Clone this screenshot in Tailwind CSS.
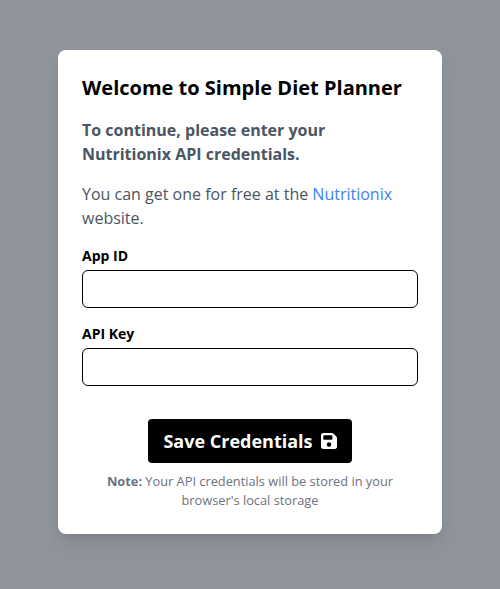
<!DOCTYPE html>
<html lang="en">
<head>
<meta charset="utf-8">
<title>Simple Diet Planner</title>
<script src="https://cdn.jsdelivr.net/npm/@tailwindcss/browser@4"></script>
</head>
<body class="flex min-h-screen items-start justify-center bg-[#8f949b] pt-[50px] font-['Open_Sans',sans-serif] text-black antialiased">
<main class="h-[484px] w-96 rounded-lg bg-white p-6 shadow-lg">
  <h1 class="text-xl leading-7 font-bold">Welcome to Simple Diet Planner</h1>
  <p class="mt-4 text-base leading-6 font-bold text-[#4b5563]">To continue, please enter your<br>Nutritionix API credentials.</p>
  <p class="mt-4 text-base leading-6 text-[#4b5563]">You can get one for free at the <a href="#" class="text-[#3b82f6]">Nutritionix</a> website.</p>
  <form>
    <label for="app" class="mt-4 block text-sm leading-5 font-bold">App ID</label>
    <input id="app" class="mt-1 block h-[38px] w-full rounded-md border border-black px-3">
    <label for="key" class="mt-4 block text-sm leading-5 font-bold">API Key</label>
    <input id="key" class="mt-1 block h-[38px] w-full rounded-md border border-black px-3">
    <button type="button" class="mx-auto mt-[33px] flex h-11 w-[204px] items-center justify-center gap-2 rounded bg-black text-lg leading-7 font-bold text-white">Save Credentials
      <svg class="size-4" viewBox="0 32 448 448" fill="currentColor"><path d="M64 32C28.700 32 0 60.700 0 96v320c0 35.300 28.700 64 64 64h320c35.300 0 64-28.700 64-64V173.300c0-17-6.700-33.300-18.700-45.300L352 50.700C340 38.700 323.700 32 306.700 32zm0 96c0-17.700 14.300-32 32-32h192c17.700 0 32 14.300 32 32v64c0 17.700-14.300 32-32 32H96c-17.700 0-32-14.300-32-32zm160 160a64 64 0 1 1 0 128 64 64 0 1 1 0-128"/></svg>
    </button>
  </form>
  <p class="mt-[9px] text-center text-[12.8px] leading-[19px] text-[#6b7280]"><b>Note:</b> Your API credentials will be stored in your<br>browser's local storage</p>
</main>
</body>
</html>
